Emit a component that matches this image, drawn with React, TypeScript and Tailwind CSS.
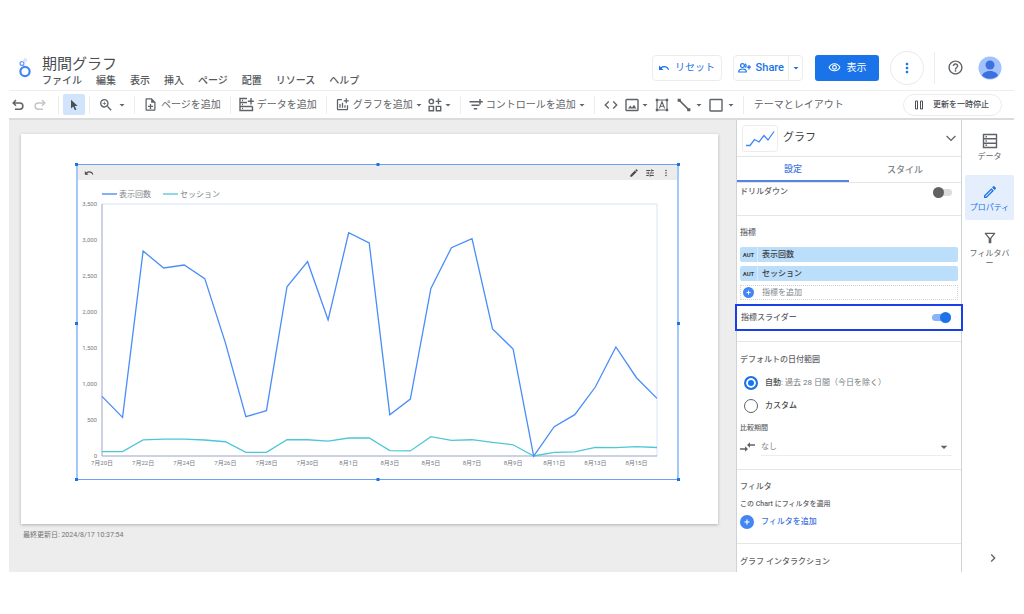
import React from 'react';
import {
  MdArrowDropDown,
  MdChevronRight,
  MdCode,
  MdEdit,
  MdHelpOutline,
  MdMoreVert,
  MdOutlineAddchart,
  MdOutlineEdit,
  MdOutlineFilterAlt,
  MdOutlineNoteAdd,
  MdOutlineVisibility,
  MdTune,
  MdUndo,
  MdZoomIn,
} from 'react-icons/md';

const menus = ['ファイル', '編集', '表示', '挿入', 'ページ', '配置', 'リソース', 'ヘルプ'];

// Daily values, 7/20 to 8/16
const views = [
  828, 536, 2847, 2611, 2653, 2463, 1574, 546, 629, 2351, 2699, 1889, 3101, 2958,
  574, 791, 2328, 2893, 3018, 1764, 1486, 0, 407, 574, 958, 1514, 1087, 800,
];
const sessions = [
  60, 60, 223, 235, 235, 222, 198, 50, 50, 226, 226, 208, 250, 250,
  75, 70, 268, 216, 226, 190, 156, 0, 50, 57, 120, 117, 130, 118,
];
const dayLabels = [
  '7月20日', '7月22日', '7月24日', '7月26日', '7月28日', '7月30日', '8月1日',
  '8月3日', '8月5日', '8月7日', '8月9日', '8月11日', '8月13日', '8月15日',
];
const ticks = [0, 500, 1000, 1500, 2000, 2500, 3000, 3500];

const PLOT = { left: 24, right: 579, top: 24, bottom: 276 };

const xAt = (index: number) => PLOT.left + (index * (PLOT.right - PLOT.left)) / (views.length - 1);
const yAt = (value: number) => PLOT.bottom - (value * (PLOT.bottom - PLOT.top)) / 3500;
const toPoints = (values: number[]) => values.map((v, i) => `${xAt(i)},${yAt(v)}`).join(' ');

const handles = [
  '-left-[3px] -top-[2px]',
  'left-1/2 -translate-x-1/2 -top-[2px]',
  '-right-[3px] -top-[2px]',
  '-left-[3px] top-1/2',
  '-right-[3px] top-1/2',
  '-left-[3px] -bottom-[2px]',
  'left-1/2 -translate-x-1/2 -bottom-[2px]',
  '-right-[3px] -bottom-[2px]',
];

const Logo = () => (
  <svg className="h-5 w-4" viewBox="0 0 16 20" fill="none" stroke="#4285f4">
    <circle cx="8" cy="13.5" r="4.6" strokeWidth="2.2" />
    <circle cx="5" cy="5.5" r="1.9" strokeWidth="1.3" stroke="#669df6" />
    <circle cx="8.2" cy="2.2" r="1.3" strokeWidth="0.9" stroke="#aecbfa" />
  </svg>
);

const UndoIcon = ({ flip = false }: { flip?: boolean }) => (
  <svg
    className={flip ? 'h-3 w-3 -scale-x-100 text-[#c4c6c9]' : 'h-3 w-3'}
    viewBox="0 0 12 12"
    fill="none"
    stroke="currentColor"
    strokeWidth="1.5"
  >
    <path d="M4 1 1.2 3.9 4 6.8M1.5 3.9h6.2a3.2 3.2 0 0 1 0 6.4H3" />
  </svg>
);

const DataIcon = () => (
  <svg className="h-[15px] w-[15px]" viewBox="0 0 15 15" fill="none" stroke="currentColor" strokeWidth="1.4">
    <path d="M8 1.5H1v12h12.5V9.5M1 5.5h7M1 9.5h12.5M12 1v6.5M8.8 4.2h6" />
    <path d="M3 3.5h1M3 7.5h1M3 11.5h1" />
  </svg>
);

const CommunityIcon = () => (
  <svg className="h-[14px] w-[14px]" viewBox="0 0 14 14" fill="none" stroke="currentColor" strokeWidth="1.4">
    <circle cx="3.3" cy="3.4" r="2.2" />
    <path d="M10.5 0.6v5.6M7.7 3.4h5.6M1.1 8.4h4.4v4.4H1.1zM8.3 8.4h4.4v4.4H8.3z" />
  </svg>
);

const ControlIcon = () => (
  <svg className="h-[14px] w-[14px]" viewBox="0 0 14 14" fill="none" stroke="currentColor" strokeWidth="1.5">
    <path d="M0.5 3.8h8M2.5 7.2h8M4.8 10.8h3.4M11 1v5.6M8.4 3.8h5.4" />
  </svg>
);

const ImageIcon = () => (
  <svg className="h-[14px] w-[14px]" viewBox="0 0 14 14" fill="none" stroke="currentColor" strokeWidth="1.4">
    <rect x="1" y="1.5" width="12" height="11" rx="0.8" />
    <path d="M3 10.6 5.2 7.6 7 9.4 9 6.8l2.4 3.8z" fill="currentColor" stroke="none" />
  </svg>
);

const TextBoxIcon = () => (
  <svg className="h-[14px] w-[14px]" viewBox="0 0 14 14" fill="none" stroke="currentColor" strokeWidth="1.1">
    <path d="M2 2h10v10H2zM4.4 10.4 7 3.6l2.6 6.8M5.3 8.2h3.4" />
    <path d="M0.8 2h2.4M10.8 2h2.4M0.8 12h2.4M10.8 12h2.4" strokeWidth="2.4" />
  </svg>
);

const LineIcon = () => (
  <svg className="h-[14px] w-[14px]" viewBox="0 0 14 14" fill="none" stroke="currentColor" strokeWidth="1.7">
    <path d="M2 2 12 12" />
    <path d="M0.6 2.2h3.2M10.2 11.8h3.2" strokeWidth="3" />
  </svg>
);

const DataRailIcon = () => (
  <svg className="h-4 w-4" viewBox="0 0 16 16" fill="none" stroke="currentColor" strokeWidth="1.4">
    <path d="M1.5 1.5h13v13h-13zM1.5 5.8h13M1.5 10.2h13" />
    <path d="M3.5 3.7h1.4M3.5 8h1.4M3.5 12.3h1.4" />
  </svg>
);

const CompareIcon = () => (
  <svg className="h-3 w-[15px]" viewBox="0 0 15 12" fill="none" stroke="currentColor" strokeWidth="1.4">
    <path d="M0 8h6M9 4h6" />
    <path d="M5 5.2 8 8l-3 2.8zM10 1.2 7 4l3 2.8z" fill="currentColor" stroke="none" />
  </svg>
);

const Caret = () => <MdArrowDropDown className="h-3 w-3 shrink-0" />;

const Header = () => (
  <header className="flex h-10 items-start justify-between pl-2 pr-3">
    <div className="flex">
      <div className="pt-2">
        <Logo />
      </div>
      <div className="pl-[9px] pt-1">
        <h1 className="text-[15px] leading-[21px] text-[#4a4d51]">期間グラフ</h1>
        <nav className="flex gap-[14px] text-[10px] font-medium leading-3 text-[#55585c]">
          {menus.map((menu) => (
            <button key={menu}>{menu}</button>
          ))}
        </nav>
      </div>
    </div>
    <div className="flex h-[35px] items-center text-[10px] leading-3 text-[#1a73e8]">
      <button className="flex h-[26px] w-[70px] items-center justify-center gap-[5px] rounded border border-[#ebecee]">
        <MdUndo className="h-3 w-3" />
        リセット
      </button>
      <div className="ml-[11px] flex h-[26px] items-center rounded border border-[#ebecee]">
        <button className="flex h-full items-center gap-[5px] border-r border-[#ebecee] px-1 text-[11px] font-medium">
          <svg className="h-3 w-[13px]" viewBox="0 0 13 12" fill="none" stroke="currentColor" strokeWidth="1.2">
            <circle cx="4.5" cy="3.6" r="1.9" />
            <path d="M0.8 10V9.2C0.8 7.8 2.8 7 4.5 7s3.7.8 3.7 2.2v.8zM11 3v4.4M8.8 5.2h4.2M7 1.8a2 2 0 0 1 0 3.6" />
          </svg>
          Share
        </button>
        <button aria-label="共有オプション" className="flex h-full w-[13px] items-center justify-center">
          <Caret />
        </button>
      </div>
      <button className="ml-3 flex h-[26px] w-16 items-center justify-center gap-[6px] rounded-[3px] bg-[#1a73e8] text-white">
        <MdOutlineVisibility className="h-[13px] w-[13px]" />
        表示
      </button>
      <button
        aria-label="その他"
        className="ml-[11px] flex h-[34px] w-[34px] items-center justify-center rounded-full border border-[#e8eaed]"
      >
        <MdMoreVert className="h-4 w-4" />
      </button>
      <span className="ml-[10px] h-8 w-px bg-[#eceded]" />
      <button aria-label="ヘルプ" className="ml-3 text-[#5f6368]">
        <MdHelpOutline className="h-[17px] w-[17px]" />
      </button>
      <button aria-label="アカウント" className="ml-[14px]">
        <svg className="h-6 w-6" viewBox="0 0 24 24">
          <circle cx="12" cy="12" r="11.5" fill="#a0c3ff" />
          <circle cx="12" cy="9" r="4.5" fill="#3f6fdc" />
          <path d="M4 19.6c1-3 4.6-4.6 8-4.6s7 1.6 8 4.6a11.5 11.5 0 0 1-16 0z" fill="#3f6fdc" />
        </svg>
      </button>
    </div>
  </header>
);

const Toolbar = () => (
  <div className="flex h-[30px] items-center border-b-2 border-t border-b-[#dadbdc] border-t-[#eceded] pr-3 text-[10px] leading-3 text-[#5f6368]">
    <div className="flex h-[18px] items-center gap-[10px] pl-[3px] pr-3">
      <button aria-label="元に戻す"><UndoIcon /></button>
      <button aria-label="やり直す"><UndoIcon flip /></button>
    </div>
    <div className="flex h-[18px] items-center border-l border-[#eceded] px-1">
      <button aria-label="選択" className="flex h-[21px] w-[22px] items-center justify-center rounded-[2px] bg-[#d2e3fc]">
        <svg className="h-3 w-3" viewBox="0 0 12 12" fill="#4a4d51">
          <path d="M3 .8v8.7l2.2-2 1.7 3.7 1.5-.7-1.7-3.6h3z" />
        </svg>
      </button>
    </div>
    <div className="flex h-[18px] items-center border-l border-[#eceded] pl-2 pr-[6px]">
      <button aria-label="ズーム" className="flex items-center gap-[2px]">
        <MdZoomIn className="h-4 w-4" />
        <Caret />
      </button>
    </div>
    <div className="flex h-[18px] items-center border-l border-[#eceded] pl-2 pr-[9px]">
      <button className="flex items-center gap-[3px]"><MdOutlineNoteAdd className="h-[15px] w-[15px]" />ページを追加</button>
    </div>
    <div className="flex h-[18px] items-center border-l border-[#eceded] pl-2 pr-[9px]">
      <button className="flex items-center gap-[3px]"><DataIcon />データを追加</button>
    </div>
    <div className="flex h-[18px] items-center gap-[3px] border-l border-[#eceded] pl-2 pr-[6px]">
      <button className="flex items-center">
        <MdOutlineAddchart className="mr-[3px] h-[15px] w-[15px]" />グラフを追加<Caret />
      </button>
      <button aria-label="コミュニティ" className="flex items-center"><CommunityIcon /><Caret /></button>
    </div>
    <div className="flex h-[18px] items-center border-l border-[#eceded] pl-2 pr-[6px]">
      <button className="flex items-center"><span className="mr-[3px]"><ControlIcon /></span>コントロールを追加<Caret /></button>
    </div>
    <div className="flex h-[18px] items-center gap-1 border-l border-[#eceded] pl-2 pr-[6px]">
      <button aria-label="埋め込み" className="mr-[2px]"><MdCode className="h-4 w-4" /></button>
      <button aria-label="画像" className="flex items-center"><ImageIcon /><Caret /></button>
      <button aria-label="テキスト" className="mr-1"><TextBoxIcon /></button>
      <button aria-label="線" className="flex items-center gap-[2px]"><LineIcon /><Caret /></button>
      <button aria-label="図形" className="flex items-center gap-[2px]">
        <svg className="h-[14px] w-[14px]" viewBox="0 0 14 14" fill="none" stroke="currentColor" strokeWidth="1.4">
          <rect x="1" y="1.5" width="12" height="11.5" rx="0.5" />
        </svg>
        <Caret />
      </button>
    </div>
    <div className="flex h-[18px] items-center border-l border-[#eceded] px-[10px]">
      <button>テーマとレイアウト</button>
    </div>
    <button className="ml-auto flex h-[22px] items-center gap-[9px] rounded-full border border-[#ebecee] pl-[10px] pr-3 text-[8px] font-medium text-[#4a4d51]">
      <svg className="h-[10px] w-[10px]" viewBox="0 0 10 10" fill="none" stroke="currentColor">
        <path d="M1.5 1h2v8h-2zM6.5 1h2v8h-2z" />
      </svg>
      更新を一時停止
    </button>
  </div>
);

const Chart = () => (
  <svg className="block w-full" viewBox="0 0 599 299" fill="none">
    <g stroke="#4285f4" strokeWidth="1.3">
      <path d="M24 14h15" />
      <path d="M85 14h15" stroke="#4ec6d8" />
    </g>
    <g className="fill-[#80858b] text-[8px]">
      <text x="41" y="17">表示回数</text>
      <text x="102" y="17">セッション</text>
    </g>
    <path d="M24 24H579V276" stroke="#d6e4fd" />
    <g className="fill-[#757b85] text-[6px]">
      {ticks.map((tick) => (
        <text key={tick} x="19" y={yAt(tick) + 2} textAnchor="end">{tick.toLocaleString('en-US')}</text>
      ))}
      {dayLabels.map((label, index) => (
        <text key={label} x={xAt(index * 2)} y="285" textAnchor="middle">{label}</text>
      ))}
    </g>
    <path d="M24 24V276H579" stroke="#9aa5c4" />
    <polyline points={toPoints(sessions)} stroke="#4ec6d8" strokeWidth="1.3" />
    <polyline points={toPoints(views)} stroke="#4a8df8" strokeWidth="1.3" />
  </svg>
);

const Canvas = () => (
  <main className="min-w-0 flex-1 bg-[#ededed] pl-3 pr-[18px] pt-[14px]">
    <div className="bg-white pb-11 pl-[55px] pr-[39px] pt-[30px] shadow-[0_1px_3px_rgba(0,0,0,0.25)]">
      <div className="relative border-x-2 border-y border-x-[#a5c8fb] border-y-[#6ba1f5]">
        <div className="flex h-[15px] items-center justify-between bg-[#ececec] px-[6px] text-[#4a4d51]">
          <button aria-label="リセット"><MdUndo className="h-[10px] w-[10px]" /></button>
          <div className="flex gap-[6px]">
            <button aria-label="編集"><MdEdit className="h-[10px] w-[10px]" /></button>
            <button aria-label="調整"><MdTune className="h-[10px] w-[10px]" /></button>
            <button aria-label="その他"><MdMoreVert className="h-[10px] w-[10px]" /></button>
          </div>
        </div>
        <Chart />
        {handles.map((position) => (
          <span key={position} className={`absolute h-[3px] w-[3px] bg-[#1a73e8] ${position}`} />
        ))}
      </div>
    </div>
    <p className="px-[2px] pt-[5px] text-[7px] leading-3 text-[#757575]">最終更新日: 2024/8/17 10:37:54</p>
  </main>
);

const Toggle = ({ id, on = false }: { id: string; on?: boolean }) => (
  <input
    id={id}
    type="checkbox"
    role="switch"
    defaultChecked={on}
    className="relative h-[11px] w-[19px] appearance-none before:absolute before:inset-x-0 before:inset-y-[2px] before:rounded-full before:bg-[#dcdcdc] after:absolute after:left-0 after:h-[11px] after:w-[11px] after:rounded-full after:bg-[#616161] checked:before:bg-[#8ab4f8] checked:after:left-2 checked:after:bg-[#1a73e8]"
  />
);

const Metric = ({ name }: { name: string }) => (
  <button className="flex h-[15px] w-full items-center rounded-[2px] bg-[#bbdefb] text-left text-[#3c4043]">
    <span className="flex h-full w-[18px] items-center justify-center border-r border-[#d6ebfd] text-[6px] font-bold">AUT</span>
    <span className="pl-1">{name}</span>
  </button>
);

const PlusBadge = ({ small = false }: { small?: boolean }) => (
  <svg className={small ? 'h-[11px] w-[11px] shrink-0' : 'h-[14px] w-[14px] shrink-0'} viewBox="0 0 14 14">
    <circle cx="7" cy="7" r="7" fill="#4285f4" />
    <path d="M7 4.4v5.2M4.4 7h5.2" stroke="#fff" strokeWidth="1.2" />
  </svg>
);

const radioStyle =
  'h-[14px] w-[14px] appearance-none rounded-full border border-[#5f6368] checked:border-2 checked:border-[#1a73e8] checked:bg-[#1a73e8] checked:shadow-[inset_0_0_0_2px_white]';

const PropertyPanel = () => (
  <aside className="w-[226px] shrink-0 border-x border-[#d0d3d6] text-[8px] font-medium leading-3 text-[#5f6368]">
    <div className="flex h-[37px] items-center border-b border-[#e3e5e7] px-[5px]">
      <div className="flex h-[27px] w-9 items-center justify-center rounded-[3px] border border-[#eceded]">
        <svg className="h-[18px] w-[30px]" viewBox="0 0 30 18" fill="none" stroke="#4285f4" strokeWidth="1.3">
          <path d="M1 16.500h4l4.500-6 4.500 2.500 5-6.500 4 4.500 6-8.500" />
        </svg>
      </div>
      <h2 className="pl-[5px] text-[11px] font-normal text-[#3c4043]">グラフ</h2>
      <button aria-label="グラフの種類" className="ml-auto">
        <svg className="h-[10px] w-[10px]" viewBox="0 0 10 10" fill="none" stroke="currentColor" strokeWidth="1.3">
          <path d="M0.6 3 5 7.4 9.4 3" />
        </svg>
      </button>
    </div>
    <div role="tablist" className="grid h-[26px] grid-cols-2 border-b border-[#e3e5e7] text-[9px]">
      <button role="tab" aria-selected="true" className="border-b-2 border-[#5484e4] text-[#3f74e0]">設定</button>
      <button role="tab" aria-selected="false" className="text-[#80868b]">スタイル</button>
    </div>

    <div className="flex items-end justify-between border-b border-[#e3e5e7] pb-[17px] pl-[3px] pr-[9px] pt-[3px]">
      <label htmlFor="drilldown">ドリルダウン</label>
      <Toggle id="drilldown" />
    </div>

    <section className="border-b border-[#e3e5e7] pb-[10px] pt-[11px]">
      <h3 className="px-[3px]">指標</h3>
      <div className="flex flex-col gap-1 px-[3px] pt-2">
        <Metric name="表示回数" />
        <Metric name="セッション" />
        <button className="flex h-[15px] items-center gap-2 border border-dotted border-[#cfd1d3] px-[2px] text-left font-normal text-[#80868b]">
          <PlusBadge small />
          指標を追加
        </button>
      </div>
      <div className="-mx-[2px] mt-1 flex h-[27px] items-center justify-between border-2 border-[#1a3fe8] pl-[4px] pr-[10px]">
        <label htmlFor="slider">指標スライダー</label>
        <Toggle id="slider" on />
      </div>
    </section>

    <section className="border-b border-[#e3e5e7] pb-[13px] pl-[3px] pr-[9px] pt-3">
      <h3>デフォルトの日付範囲</h3>
      <div className="flex flex-col gap-[7px] pl-1 pt-[9px]">
        <label className="flex h-4 items-center gap-[7px] text-[#4a4d51]">
          <input type="radio" name="range" defaultChecked className={radioStyle} />
          <span>自動<span className="font-normal text-[#757b80]">: 過去 28 日間（今日を除く）</span></span>
        </label>
        <label className="flex h-4 items-center gap-[7px] text-[#4a4d51]">
          <input type="radio" name="range" className={radioStyle} />
          カスタム
        </label>
      </div>
      <label htmlFor="compare" className="block pt-2 text-[7px]">比較期間</label>
      <div className="flex h-[22px] items-end gap-[6px]">
        <div className="flex h-[18px] items-center"><CompareIcon /></div>
        <div className="flex h-[18px] flex-1 items-center border-b border-[#eceded]">
          <select id="compare" className="w-full appearance-none font-normal text-[#80868b] outline-none">
            <option>なし</option>
          </select>
          <MdArrowDropDown className="h-4 w-4 shrink-0" />
        </div>
      </div>
    </section>

    <section className="border-b border-[#e3e5e7] pb-[14px] pl-[3px] pt-[11px]">
      <h3>フィルタ</h3>
      <p className="pt-[5px] text-[7px]">この Chart にフィルタを適用</p>
      <button className="mt-[5px] flex items-center gap-[7px] text-[#3f74e0]">
        <PlusBadge />
        フィルタを追加
      </button>
    </section>

    <h3 className="pb-1 pl-[3px] pt-3">グラフ インタラクション</h3>
  </aside>
);

const Rail = () => (
  <nav className="flex w-[52px] shrink-0 flex-col items-center pl-[3px] text-[8px] leading-3 text-[#5f6368]">
    <button className="flex h-[55px] w-full flex-col items-center gap-[2px] pt-[13px]">
      <DataRailIcon />
      データ
    </button>
    <button className="flex h-[45px] w-full flex-col items-center gap-[2px] rounded-[2px] bg-[#e4eefd] pt-[9px] text-[#1a73e8]">
      <MdOutlineEdit className="h-4 w-4" />
      プロパティ
    </button>
    <button className="flex w-full flex-col items-center gap-[3px] pt-[10px]">
      <MdOutlineFilterAlt className="h-4 w-4" />
      <span className="w-10 leading-[10px]">フィルタバー</span>
    </button>
    <button aria-label="パネルを閉じる" className="mb-[6px] mt-auto pl-[6px]">
      <MdChevronRight className="h-4 w-4" />
    </button>
  </nav>
);

const App: React.FC = () => {
  return (
    <div className="bg-white pb-[42px] pl-[9px] pr-[10px] pt-[50px] font-['Roboto','Noto_Sans_CJK_JP',sans-serif]">
      <Header />
      <Toolbar />
      <div className="flex">
        <Canvas />
        <PropertyPanel />
        <Rail />
      </div>
    </div>
  );
};

export default App;
